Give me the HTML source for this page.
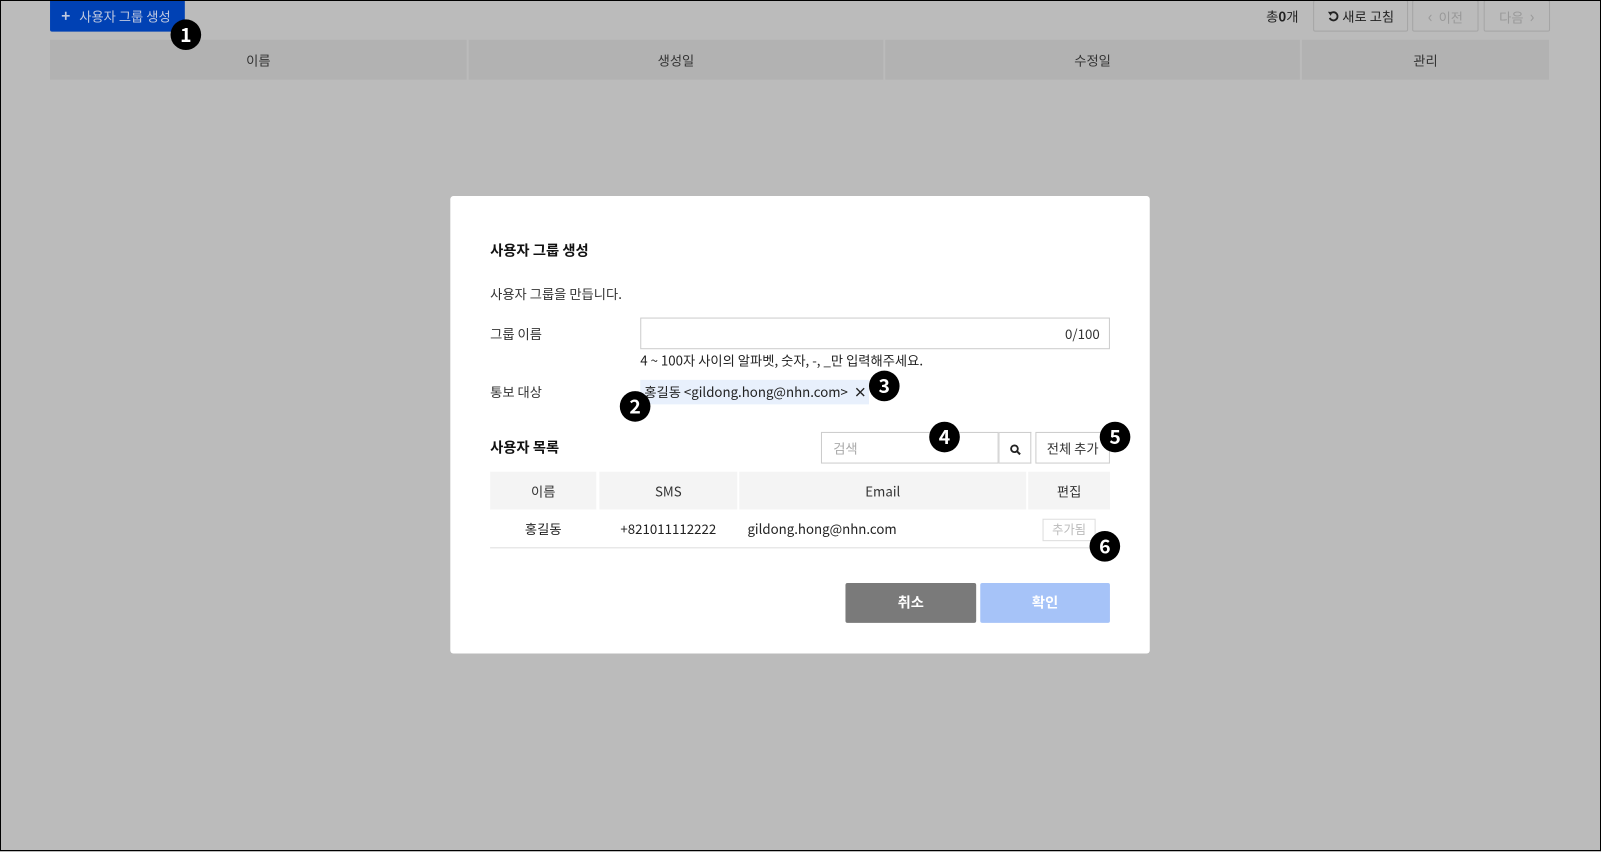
<!DOCTYPE html>
<html><head><meta charset="utf-8"><style>
*{box-sizing:border-box;margin:0;padding:0}
body{width:1601px;height:851px;background:#bbb;font-family:"Noto Sans CJK KR","Liberation Sans",sans-serif;position:relative;overflow:hidden;color:#222}
.wrap{position:absolute;left:0;top:0;width:1568px;height:834px;transform:scale(1.0211);transform-origin:0 0}
.frame{position:absolute;left:0;top:0;width:1601px;height:851px;border:1px solid #000;pointer-events:none;z-index:10}
.a{position:absolute;white-space:nowrap}
.badge{position:absolute;width:30px;height:30px;border-radius:50%;background:#000;color:#fff;font-weight:bold;font-size:19px;line-height:30px;text-align:center;z-index:5}
.th{position:absolute;top:39px;height:39px;background:#b2b2b2;font-size:13px;color:#333;text-align:center;line-height:39px}
.btn{position:absolute;border:1px solid #a5a5a5;border-radius:2px;font-size:13px;text-align:center;line-height:29px;white-space:nowrap}
.modal{position:absolute;left:441px;top:192px;width:685px;height:448px;background:#fff;border-radius:3px}
.m{position:absolute;font-size:13px;color:#333;line-height:18px;white-space:nowrap}
.mth{position:absolute;top:270px;height:37px;background:#f4f4f4;font-size:13px;text-align:center;line-height:37px;color:#333}
.mtd{position:absolute;top:307px;height:38px;font-size:13px;line-height:38px;color:#222;white-space:nowrap}
</style></head><body>
<div class="wrap">
<div class="a" style="left:49px;top:0;width:132px;height:31px;background:#0041b4;border-radius:0 0 2px 2px;color:#bfc9e0;font-size:13px;line-height:31px;padding-left:11px"><b style="font-size:15px">+</b>&nbsp;&nbsp; 사용자 그룹 생성</div>
<div class="badge" style="left:167px;top:19px">1</div>
<div class="th" style="left:49px;width:408px">이름</div>
<div class="th" style="left:459px;width:406px">생성일</div>
<div class="th" style="left:867px;width:406px">수정일</div>
<div class="th" style="left:1275px;width:242px">관리</div>
<div class="a" style="left:1240px;top:0;line-height:31px;font-size:13px;color:#222">총<b>0</b>개</div>
<div class="btn" style="left:1286px;top:0;width:93px;height:31px;color:#222"><svg width="12" height="12" viewBox="0 0 12 12" style="vertical-align:-1px"><path d="M3 3.2A4 4 0 1 1 2.2 7.5" fill="none" stroke="#222" stroke-width="1.8"/><path d="M0.5 1.5L4.8 1.8L3.2 5.5Z" fill="#222"/></svg> 새로 고침</div>
<div class="btn" style="left:1383px;top:0;width:65px;height:31px;color:#999"><span style="font-size:16px">‹</span>&nbsp; 이전</div>
<div class="btn" style="left:1453px;top:0;width:65px;height:31px;color:#999">다음 &nbsp;<span style="font-size:16px">›</span></div>

<div class="modal">
 <div class="m" style="left:39px;top:44px;font-size:14px;font-weight:bold;color:#111">사용자 그룹 생성</div>
 <div class="m" style="left:39px;top:87px">사용자 그룹을 만듭니다.</div>
 <div class="m" style="left:39px;top:126px">그룹 이름</div>
 <div class="a" style="left:186px;top:119px;width:460px;height:31px;border:1px solid #ccc;font-size:13px;text-align:right;padding-right:9px;line-height:29px;color:#333">0/100</div>
 <div class="m" style="left:186px;top:152px;color:#222">4 ~ 100자 사이의 알파벳, 숫자, -, _만 입력해주세요.</div>
 <div class="m" style="left:39px;top:183px">통보 대상</div>
 <div class="a" style="left:186px;top:180px;width:224px;height:24px;background:#e8f0fc;font-size:13px;line-height:24px;padding-left:4px;color:#222">홍길동 &lt;gildong.hong@nhn.com&gt;<b style="position:absolute;left:209px;top:0">×</b></div>
 <div class="m" style="left:39px;top:237px;font-size:14px;font-weight:bold;color:#111">사용자 목록</div>
 <div class="a" style="left:363px;top:231px;width:174px;height:31px;border:1px solid #ccc;font-size:13px;color:#aaa;line-height:29px;padding-left:11px">검색</div>
 <div class="a" style="left:537px;top:231px;width:32px;height:31px;border:1px solid #ccc;border-left:1px solid #ddd;text-align:center;line-height:29px">
  <svg width="11" height="11" viewBox="0 0 11 11" style="vertical-align:-1px"><circle cx="4.5" cy="4.5" r="3.3" fill="none" stroke="#222" stroke-width="1.8"/><path d="M7 7L10 10" stroke="#222" stroke-width="2"/></svg></div>
 <div class="a" style="left:573px;top:231px;width:73px;height:31px;border:1px solid #ccc;font-size:13px;text-align:center;line-height:29px;color:#333">전체 추가</div>
 <div class="mth" style="left:39px;width:104px">이름</div>
 <div class="mth" style="left:146px;width:135px">SMS</div>
 <div class="mth" style="left:283px;width:281px">Email</div>
 <div class="mth" style="left:566px;width:80px">편집</div>
 <div class="mtd" style="left:39px;width:104px;text-align:center">홍길동</div>
 <div class="mtd" style="left:146px;width:135px;text-align:center">+821011112222</div>
 <div class="mtd" style="left:291px">gildong.hong@nhn.com</div>
 <div class="a" style="left:580px;top:316px;width:52px;height:22px;border:1px solid #ddd;font-size:12px;color:#bbb;text-align:center;line-height:20px">추가됨</div>
 <div class="a" style="left:39px;top:344px;width:607px;height:1px;background:#ddd"></div>
 <div class="a" style="left:387px;top:379px;width:128px;height:39px;background:#7a7a7a;color:#fff;font-size:14px;font-weight:bold;text-align:center;line-height:39px;border-radius:2px">취소</div>
 <div class="a" style="left:519px;top:379px;width:127px;height:39px;background:#a6c3f8;color:#fff;font-size:14px;font-weight:bold;text-align:center;line-height:39px;border-radius:2px">확인</div>
</div>
<div class="badge" style="left:607px;top:383px">2</div>
<div class="badge" style="left:851px;top:363px">3</div>
<div class="badge" style="left:910px;top:413px">4</div>
<div class="badge" style="left:1077px;top:413px">5</div>
<div class="badge" style="left:1067px;top:520px">6</div>
</div>
<div class="frame"></div>
</body></html>
